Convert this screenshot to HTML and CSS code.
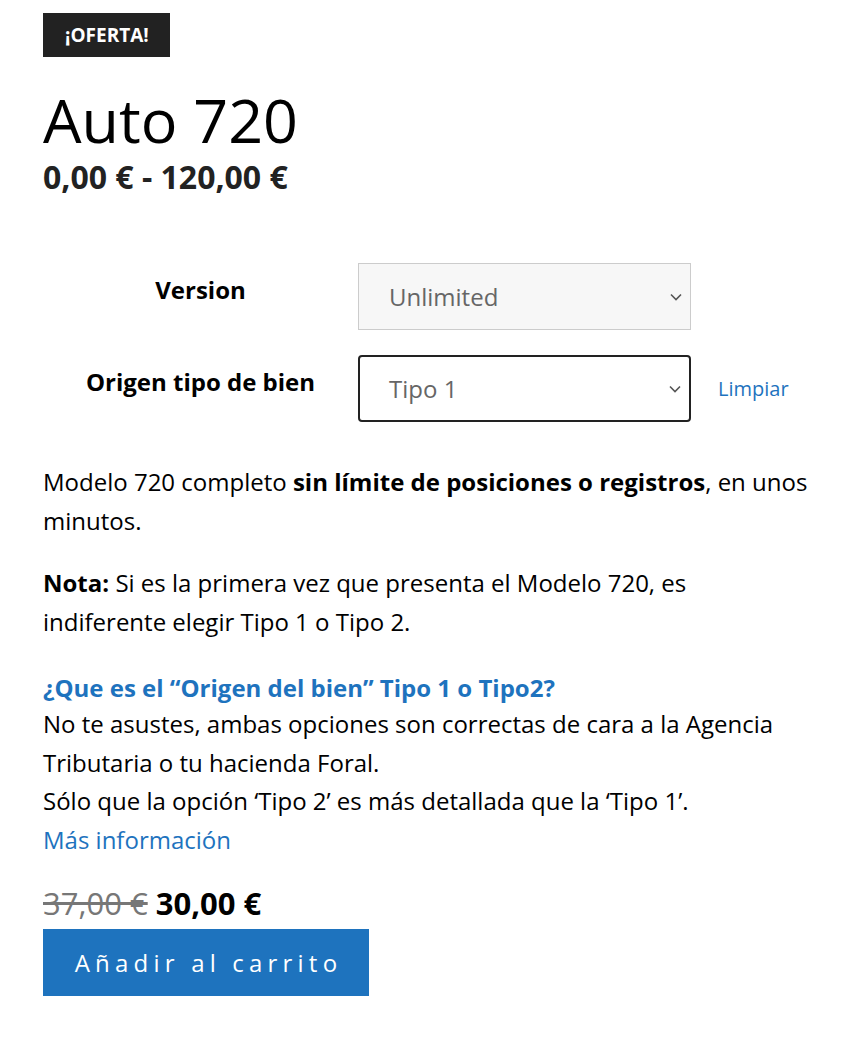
FILE: index.html
```html
<!DOCTYPE html>
<html lang="es">
<head>
    <meta charset="UTF-8">
    <meta name="viewport" content="width=device-width, initial-scale=1.0">
    <title>Auto 720</title>
    <link rel="stylesheet" href="styles.css">
</head>
<body>
    <div id="product">
        <span class="onsale">¡OFERTA!</span>
        <h1 class="product-title">Auto 720</h1>
        <p class="price-range">0,00 € - 120,00 €</p>

        <table class="variations">
            <tr>
                <th class="label">Version</th>
                <td class="value">
                    <div class="select-wrap disabled">
                        <span>Unlimited</span>
                        <svg class="chevron" viewBox="0 0 12 8" width="12" height="8"><path d="M1 1.5l5 5 5-5" fill="none" stroke="#555" stroke-width="1.6"/></svg>
                    </div>
                </td>
            </tr>
            <tr>
                <th class="label">Origen tipo de bien</th>
                <td class="value">
                    <div class="select-wrap focused">
                        <span>Tipo 1</span>
                        <svg class="chevron" viewBox="0 0 12 8" width="12" height="8"><path d="M1 1.5l5 5 5-5" fill="none" stroke="#555" stroke-width="1.6"/></svg>
                    </div>
                    <a href="#" class="reset">Limpiar</a>
                </td>
            </tr>
        </table>

        <div class="description">
            <p>Modelo 720 completo <strong>sin límite de posiciones o registros</strong>, en unos minutos.</p>
            <p><strong>Nota:</strong> Si es la primera vez que presenta el Modelo 720, es indiferente elegir Tipo 1 o Tipo 2.</p>
            <p class="faq-block">
                <a href="#" class="faq">¿Que es el “Origen del bien” Tipo 1 o Tipo2?</a>
                No te asustes, ambas opciones son correctas de cara a la Agencia Tributaria o tu hacienda Foral.<br>
                Sólo que la opción ‘Tipo 2’ es más detallada que la ‘Tipo 1’.<br>
                <a href="#" class="more">Más información</a>
            </p>
        </div>

        <p class="price"><del>37,00 €</del> <ins>30,00 €</ins></p>
        <button class="add-to-cart">Añadir al carrito</button>
    </div>
</body>
</html>
```

FILE: styles.css
```css
body {
    font-family: "Open Sans", "Noto Sans", sans-serif;
    margin: 0;
    color: #000;
    background: #fff;
}
#product {
    padding: 13px 29px 0 43px;
}
.onsale {
    display: inline-block;
    background-color: #222;
    color: #fff;
    font-weight: 700;
    font-size: 19px;
    line-height: 44px;
    padding: 0 21px 0 22px;
}
.product-title {
    font-weight: 400;
    font-size: 61px;
    line-height: 1;
    margin: 32px 0 0 0;
}
.price-range {
    font-weight: 700;
    font-size: 32px;
    color: #222;
    margin: 8px 0 0 0;
    line-height: 1.2;
}
.variations {
    border-collapse: collapse;
    margin-top: 67px;
}
.variations th.label {
    width: 315px;
    padding: 0;
    font-size: 24px;
    font-weight: 700;
    text-align: center;
    vertical-align: top;
    padding-top: 10px;
}
.variations td.value {
    padding: 0 0 25px 0;
    display: flex;
    align-items: center;
}
.select-wrap {
    width: 333px;
    height: 67px;
    box-sizing: border-box;
    display: flex;
    align-items: center;
    justify-content: space-between;
    padding: 0 8px 0 30px;
    font-size: 24px;
    color: #666;
}
.select-wrap.disabled {
    background-color: #f7f7f7;
    border: 1px solid #ccc;
}
.select-wrap.focused {
    background-color: #fff;
    border: 2px solid #222;
    border-radius: 4px;
    padding-left: 29px;
}
.chevron {
    display: block;
}
.reset {
    color: #1e73be;
    text-decoration: none;
    font-size: 20px;
    margin-left: 27px;
}
.description {
    font-size: 24px;
    line-height: 38.5px;
    margin-top: 16px;
}
.description p {
    margin: 0 0 24px 0;
}
.description strong {
    font-weight: 700;
}
.description .faq-block {
    margin-top: 29px;
    margin-bottom: 26px;
}
.faq {
    display: block;
    line-height: 35px;
    color: #1e73be;
    font-weight: 700;
    text-decoration: none;
}
.more {
    color: #1e73be;
    text-decoration: none;
}
.price {
    margin: 0;
    font-size: 31px;
    line-height: 1.2;
}
.price del {
    color: #777;
}
.price ins {
    text-decoration: none;
    font-weight: 700;
}
.add-to-cart {
    display: block;
    background-color: #1e73be;
    color: #fff;
    border: none;
    font-family: "Open Sans", "Noto Sans", sans-serif;
    font-size: 24px;
    letter-spacing: 5.2px;
    width: 326px;
    height: 67px;
    margin-top: 6px;
    padding: 0 0 0 5px;
    cursor: pointer;
}
```
